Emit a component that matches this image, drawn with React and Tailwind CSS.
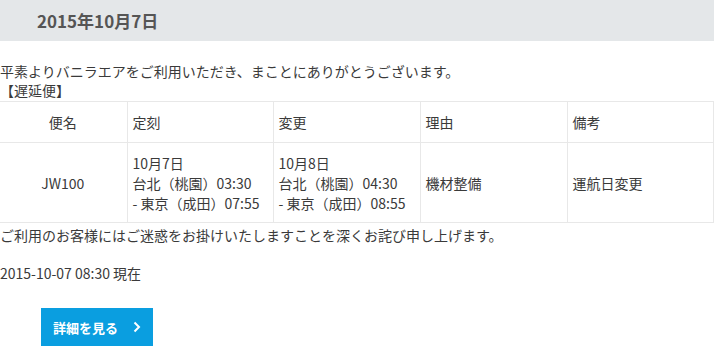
export default function App() {
  const cell = "border border-[#e8e8e8] align-middle p-0";
  return (
    <div className="w-[716px] h-[355px] overflow-hidden bg-white text-[#3a3a3a] text-[14px] leading-[19px]" style={{ fontFamily: '"Noto Sans CJK JP", "Noto Sans", sans-serif' }}>
      <div className="w-[714px] h-[41px] bg-[#e4e7e9] flex items-center pl-[37px]">
        <h2 className="text-[17px] font-bold text-[#555] leading-none">2015年10月7日</h2>
      </div>
      <div className="pt-[21px]">
        <p>平素よりバニラエアをご利用いただき、まことにありがとうございます。</p>
        <p>【遅延便】</p>
        <table className="mt-px w-[714px] border-collapse table-fixed leading-[20px] -ml-px">
          <colgroup>
            <col className="w-[128px]" />
            <col className="w-[146px]" />
            <col className="w-[147px]" />
            <col className="w-[147px]" />
            <col className="w-[146px]" />
          </colgroup>
          <tbody>
            <tr>
              <td className={`${cell} h-[41px] text-center border-l-0`}>便名</td>
              <td className={`${cell} px-[5px]`}>定刻</td>
              <td className={`${cell} px-[5px]`}>変更</td>
              <td className={`${cell} px-[5px]`}>理由</td>
              <td className={`${cell} px-[5px]`}>備考</td>
            </tr>
            <tr>
              <td className={`${cell} h-[80px] text-center border-l-0`}>JW100</td>
              <td className={`${cell} px-[5px]`}>10月7日<br />台北（桃園）03:30<br />- 東京（成田）07:55</td>
              <td className={`${cell} px-[5px]`}>10月8日<br />台北（桃園）04:30<br />- 東京（成田）08:55</td>
              <td className={`${cell} px-[5px]`}>機材整備</td>
              <td className={`${cell} px-[5px]`}>運航日変更</td>
            </tr>
          </tbody>
        </table>
        <p className="mt-[3px]">ご利用のお客様にはご迷惑をお掛けいたしますことを深くお詫び申し上げます。</p>
        <p className="mt-[19px]">2015-10-07 08:30 現在</p>
        <div className="mt-[25px] pl-[41px]">
          <a className="inline-flex items-center w-[112px] h-[38px] bg-[#0a9ee0] text-white font-bold text-[13px] pl-[12px]">
            <span>詳細を見る</span>
            <svg className="ml-[15px]" width="8" height="12" viewBox="0 0 8 12" fill="none">
              <path d="M1.5 1.5 L6 6 L1.5 10.5" stroke="white" strokeWidth="2" />
            </svg>
          </a>
        </div>
      </div>
    </div>
  );
}
